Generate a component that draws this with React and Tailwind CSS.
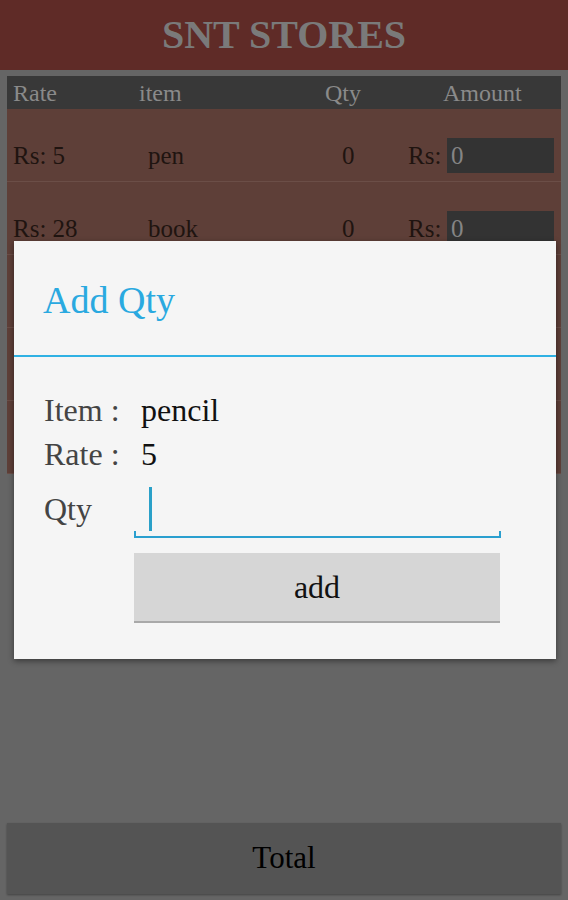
const rows = [
  { rate: 5, item: 'pen' },
  { rate: 28, item: 'book' },
  null,
  null,
  null,
]

const App = () => {
  return (
    <div className="relative flex flex-col h-[900px] w-full bg-[#656565] [font-family:'Liberation_Serif',serif]">
      {/* Title bar */}
      <div className="flex items-center justify-center h-[70px] bg-[#5f2b27]">
        <h1 className="text-[40px] font-bold text-[#7a7a7a]">SNT STORES</h1>
      </div>

      {/* Table */}
      <div className="mx-[7px] mt-[6px]">
        <div className="grid grid-cols-[126px_186px_118px_1fr] items-center h-[33px] pl-[6px] bg-[#383838] text-[24px] leading-none text-[#8a8a8a]">
          <span>Rate</span>
          <span>item</span>
          <span>Qty</span>
          <span>Amount</span>
        </div>
        {rows.map((row, i) => (
          <div
            key={i}
            className="flex items-center h-[73px] pt-[29px] pb-[8px] pl-[6px] bg-[#5e3f38] border-b border-[#6b4e47] text-[25px] text-[#1f1410]"
          >
            {row && (
              <>
                <span className="w-[135px]">Rs: {row.rate}</span>
                <span className="w-[194px]">{row.item}</span>
                <span className="w-[66px]">0</span>
                <span className="w-[39px]">Rs:</span>
                <span className="flex items-center w-[107px] h-[35px] pl-[4px] bg-[#333333] text-[#858585]">0</span>
              </>
            )}
          </div>
        ))}
      </div>

      <div className="flex-1" />

      {/* Total */}
      <div className="flex items-center justify-center mx-[7px] mb-[6px] h-[71px] bg-[#545454] shadow-[0_1px_2px_rgba(0,0,0,0.35)] text-[31px] text-black">
        Total
      </div>

      {/* Dialog */}
      <div className="absolute left-[14px] top-[241px] w-[542px] h-[418px] bg-[#f5f5f5] shadow-[0_2px_6px_rgba(0,0,0,0.45)]">
        <div className="h-[114px] pt-[40px] pl-[29px] text-[38px] leading-none text-[#2aa9e0]">Add Qty</div>
        <div className="h-[2px] bg-[#2fb1e3]" />
        <div className="pl-[30px] pt-[31px] text-[32px] leading-[44px]">
          <div className="flex">
            <span className="w-[97px] text-[#444444]">Item :</span>
            <span className="text-[#111111]">pencil</span>
          </div>
          <div className="flex">
            <span className="w-[97px] text-[#444444]">Rate :</span>
            <span className="text-[#111111]">5</span>
          </div>
          <div className="flex mt-[10px]">
            <div className="w-[90px] h-[52px] pt-[1px] text-[#444444]">Qty</div>
            <div className="relative w-[367px] h-[52px]">
              <div className="absolute left-[15px] top-[1px] w-[3px] h-[44px] bg-[#2aa0c8]" />
              <div className="absolute left-0 bottom-0 w-full h-[2px] bg-[#2a9fcf]" />
              <div className="absolute left-0 bottom-0 w-[2px] h-[7px] bg-[#2a9fcf]" />
              <div className="absolute right-0 bottom-0 w-[2px] h-[7px] bg-[#2a9fcf]" />
            </div>
          </div>
          <button className="flex items-center justify-center mt-[15px] ml-[90px] w-[366px] h-[70px] bg-[#d6d6d6] border-b-2 border-[#a9a9a9] text-[32px] text-[#111111]">
            add
          </button>
        </div>
      </div>
    </div>
  )
}

export default App
